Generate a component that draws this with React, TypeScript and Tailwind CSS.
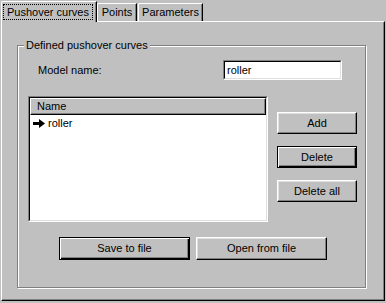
import React from 'react';

function Button({ label, isDefault, className }: { label: string; isDefault?: boolean; className: string }) {
  if (isDefault) {
    return (
      <div className={`${className} border border-black shadow-[inset_1px_1px_0_#fff,inset_-1px_-1px_0_#000,inset_-2px_-2px_0_#808080] flex items-center justify-center`}>
        {label}
      </div>
    );
  }
  return (
    <div className={`${className} border-t border-l border-t-white border-l-white border-r border-b border-r-black border-b-black shadow-[inset_-1px_-1px_0_#808080,inset_1px_1px_0_#dfdfdf] flex items-center justify-center`}>
      {label}
    </div>
  );
}

export default function App() {
  return (
    <div className="w-[386px] h-[303px] bg-[#c0c0c0] pt-[1px] pl-[1px] text-[11px] leading-none text-black font-['Liberation_Sans',Arial,sans-serif]">
      {/* Tabs */}
      <div className="flex items-end h-[20px]">
        <div className="relative z-10 -mb-[1px] w-[96px] h-[21px] bg-[#c0c0c0] border-t border-l border-white border-r border-r-black shadow-[inset_-1px_0_0_#808080] rounded-tl-[2px] pt-[2px] pl-[1px]">
          <div className="w-[90px] h-[16px] border border-dotted border-black flex items-center justify-center">
            Pushover curves
          </div>
        </div>
        <div className="w-[40px] h-[18px] border-t border-l border-white border-r border-r-black shadow-[inset_-1px_0_0_#808080] rounded-tl-[2px] flex items-center justify-center">
          Points
        </div>
        <div className="ml-[1px] w-[65px] h-[18px] border-t border-l border-white border-r border-r-black shadow-[inset_-1px_0_0_#808080] rounded-tl-[2px] flex items-center justify-center">
          Parameters
        </div>
      </div>

      {/* Panel */}
      <div className="w-[384px] h-[280px] border-t border-l border-white border-r border-b border-r-black border-b-black shadow-[inset_-1px_-1px_0_#808080] pt-[23px] pl-[15px]">
        <div className="relative w-[349px] h-[243px] border border-[#808080] shadow-[inset_1px_1px_0_#fff,1px_1px_0_#fff]">
          <span className="absolute left-[6px] -top-[7px] px-[2px] bg-[#c0c0c0] leading-[13px]">
            Defined pushover curves
          </span>

          {/* Model name */}
          <div className="flex items-center mt-[14px] pl-[20px]">
            <div className="w-[185px]">Model name:</div>
            <div className="w-[119px] h-[20px] border-t border-l border-[#808080] border-r border-b border-r-white border-b-white">
              <div className="h-full border-t border-l border-black border-r border-b border-r-[#dfdfdf] border-b-[#dfdfdf] bg-white flex items-center pl-[2px]">
                roller
              </div>
            </div>
          </div>

          {/* List and side buttons */}
          <div className="flex mt-[16px] pl-[10px]">
            <div className="w-[240px] h-[126px] border-t border-l border-[#808080] border-r border-b border-r-white border-b-white">
              <div className="h-full border-t border-l border-black border-r border-b border-r-[#dfdfdf] border-b-[#dfdfdf] bg-white">
                <div className="h-[17px] bg-[#c0c0c0] border-t border-l border-white border-r border-b border-r-black border-b-black shadow-[inset_-1px_-1px_0_#808080] flex items-center pl-[6px]">
                  Name
                </div>
                <div className="h-[16px] flex items-center pl-[3px]">
                  <svg width="12" height="9" viewBox="0 0 12 9" className="shrink-0">
                    <rect x="0" y="3" width="6" height="3" fill="#000" />
                    <polygon points="6,0 12,4.5 6,9" fill="#000" />
                  </svg>
                  <span className="ml-[3px]">roller</span>
                </div>
              </div>
            </div>
            <div className="ml-[9px] pt-[16px] flex flex-col gap-[12px]">
              <Button label="Add" className="w-[80px] h-[22px]" />
              <Button label="Delete" isDefault className="w-[80px] h-[22px]" />
              <Button label="Delete all" className="w-[80px] h-[22px]" />
            </div>
          </div>

          {/* Bottom buttons */}
          <div className="flex mt-[15px] pl-[41px] gap-[6px]">
            <Button label="Save to file" isDefault className="w-[131px] h-[23px]" />
            <Button label="Open from file" className="w-[131px] h-[23px]" />
          </div>
        </div>
      </div>
    </div>
  );
}
